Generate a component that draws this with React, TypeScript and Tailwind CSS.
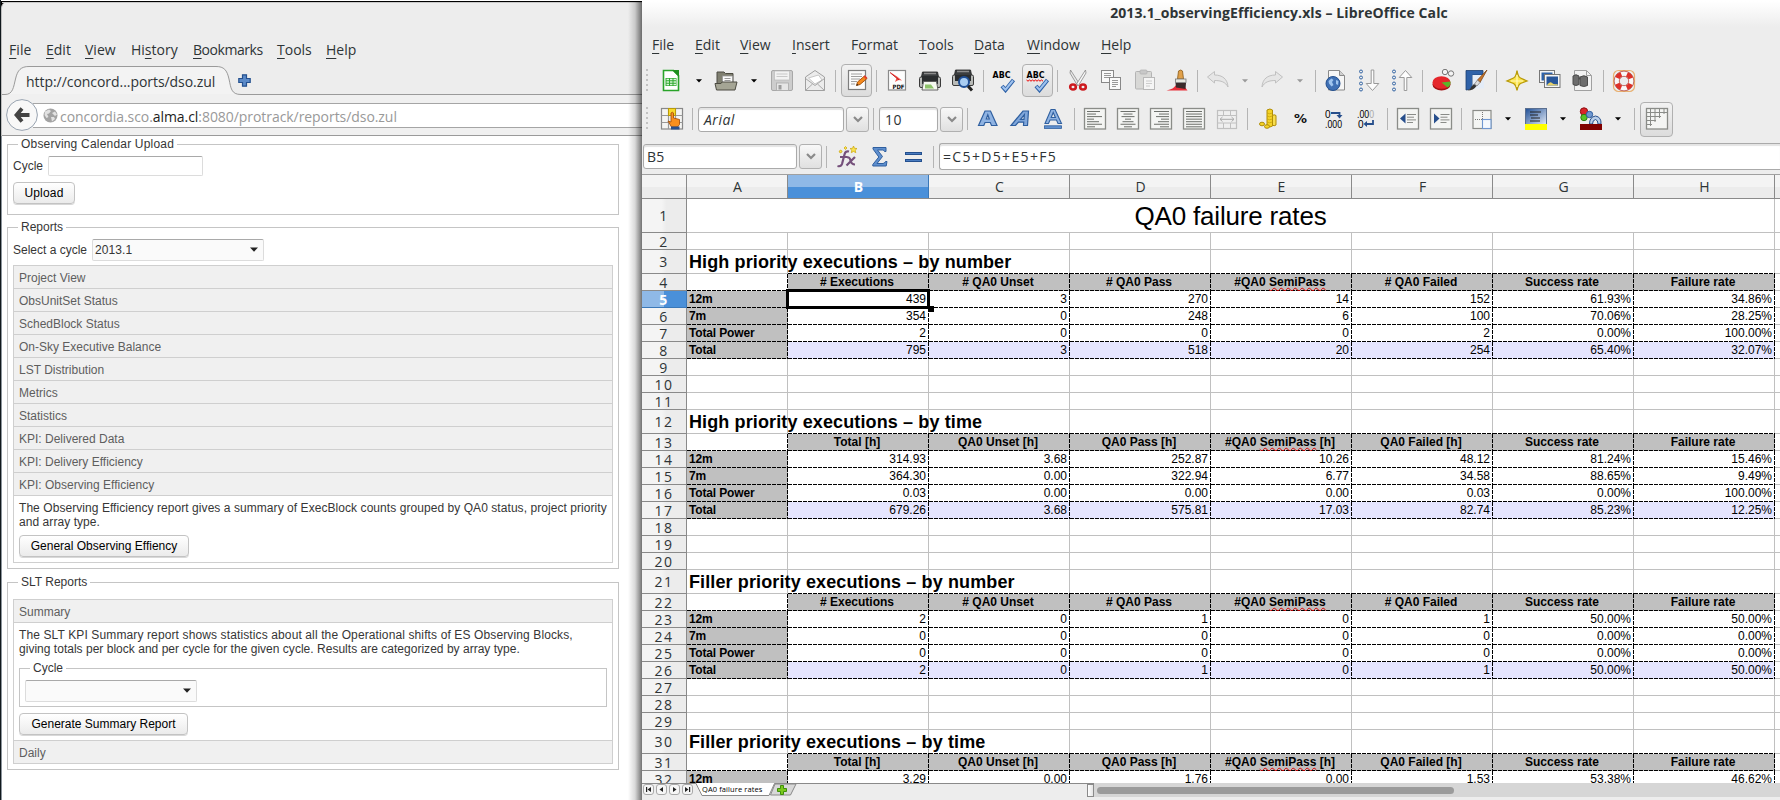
import type { ReactNode } from "react";

/* ---------- shared pieces ---------- */

const UI = "font-['Open_Sans','Noto_Sans',sans-serif]";
const SANS = "font-['Liberation_Sans',Arial,sans-serif]";

function MenuItem({ label, k = 0, className }: { label: string; k?: number; className: string }) {
  return (
    <span className={`shrink-0 whitespace-nowrap ${className}`}>
      {label.slice(0, k)}
      <span className="underline decoration-1 underline-offset-[3px]">{label[k]}</span>
      {label.slice(k + 1)}
    </span>
  );
}

/* ---------- browser window ---------- */

function Legend({ children }: { children: ReactNode }) {
  return <legend className="ml-[5px] h-[13px] px-[3px] leading-[13px]">{children}</legend>;
}

function PushButton({ children, className }: { children: ReactNode; className: string }) {
  return (
    <button
      className={`block h-[22px] rounded-[4px] border border-[#c3c3c3] bg-linear-to-b from-white to-[#ebebeb] text-center leading-[20px] whitespace-nowrap text-black shadow-[0_1px_0_#d8d8d8] ${className}`}
    >
      {children}
    </button>
  );
}

function Combo({ value }: { value: string }) {
  return (
    <div className="flex h-[22px] w-[172px] items-center justify-between rounded-[2px] border border-[#dcdcdc] border-t-[#a9a9a9] bg-[#fafafa] pr-[5px] pb-px pl-[2px]">
      <span className="tracking-[0.1px]">{value}</span>
      <svg width="8" height="5" viewBox="0 0 8 5">
        <path d="M0 .5h8L4 4.8z" fill="#222" />
      </svg>
    </div>
  );
}

function AccordionHead({ children, className = "border-b" }: { children: ReactNode; className?: string }) {
  return (
    <div className={`h-[23px] border-[#cfcfcf] bg-[#f0f0f0] pl-[5px] leading-[24px] text-[#5e5e5e] ${className}`}>
      {children}
    </div>
  );
}

const REPORTS = [
  "Project View",
  "ObsUnitSet Status",
  "SchedBlock Status",
  "On-Sky Executive Balance",
  "LST Distribution",
  "Metrics",
  "Statistics",
  "KPI: Delivered Data",
  "KPI: Delivery Efficiency",
  "KPI: Observing Efficiency",
];

function Browser() {
  return (
    <div className="relative flex h-full w-[642px] shrink-0 flex-col overflow-hidden border-l border-[#10181c] bg-[linear-gradient(#ffffff_0_1px,#000000_1px)] pt-[2px]">
      <div className={`flex h-[134px] shrink-0 flex-col rounded-tl-[6px] border-l border-[#bdbdbd] bg-[#ededed] text-[14px] text-[#2e3436] ${UI}`}>
        <div className="flex h-[64px] items-end border-t border-[#c9c9c9] pb-[6px] pl-[7px] leading-[20px]">
          <MenuItem label="File" className="w-[37px] tracking-[0.1px]" />
          <MenuItem label="Edit" className="w-[39px]" />
          <MenuItem label="View" className="w-[46px]" />
          <MenuItem label="History" k={2} className="w-[62px]" />
          <MenuItem label="Bookmarks" className="w-[84px] tracking-[-0.45px]" />
          <MenuItem label="Tools" className="w-[49px]" />
          <MenuItem label="Help" className="w-[40px]" />
        </div>
        <div className="relative flex h-[29px] items-center">
          <svg className="absolute inset-0" width="640" height="29" viewBox="2 0 640 29">
            <path
              d="M2 28.5H5C13 28.5 13.500 21 15.500 13C17.500 4 21 .5 29 .5H216C224 .5 227 4 229 13C231 22 231 28.500 241 28.500H642"
              fill="#f3f3f3"
              stroke="#9a9a9a"
            />
          </svg>
          <span className="relative ml-[24px] w-[212px] pt-px tracking-[-0.05px]">http://concord...ports/dso.zul</span>
          <svg className="relative" width="13" height="13" viewBox="0 0 13 13">
            <path d="M4.500 .8h4v3.700h3.700v4h-3.700v3.700h-4v-3.700H.8v-4h3.700z" fill="#5b8ac8" stroke="#24508f" strokeWidth="1.200" />
          </svg>
        </div>
        <div className="relative flex h-[41px] items-center border-b border-[#9a9a9a] bg-[#f0f0f0] pl-[4px]">
          <svg className="relative z-10 shrink-0" width="32" height="32" viewBox="0 0 32 32">
            <circle cx="16" cy="16" r="15.400" fill="#f8f8f8" stroke="#98a3b0" strokeWidth="1" />
            <path d="M10 16h13.500M16 9.500L10.500 16l5.500 6.500" fill="none" stroke="#444" strokeWidth="3.800" />
          </svg>
          <div className="-ml-[5px] flex h-[25px] flex-1 items-center border-y border-[#a5a5a5] bg-white pl-[10px]">
            <svg width="15" height="15" viewBox="0 0 15 15">
              <circle cx="7.500" cy="7.500" r="7" fill="#a3a3a3" />
              <path d="M2 3.500L6 1.500 8 3 6 5.500 4 6 5.500 9 3.500 10 1.500 7zM9 5l3-1.500 2 3-2 1.500zM8 9l3 0 1 2-3 2.500z" fill="#e2e2e2" />
            </svg>
            <span className="ml-[2px] pt-[2px] tracking-[-0.06px] whitespace-nowrap text-[#999]">
              concordia.sco.<span className="text-[#1c1c1c]">alma.cl</span>:8080/protrack/reports/dso.zul
            </span>
          </div>
        </div>
      </div>
      <div className={`flex flex-1 flex-col border-l border-[#8c949c] bg-white pt-[2px] pl-[5px] text-[12px] text-[#363636] ${SANS}`}>
        <fieldset className="h-[77px] w-[612px] border border-[#c5c5c5] pt-[5px] pl-[5px]">
          <Legend>
            <span className="tracking-[0.2px]">Observing Calendar Upload</span>
          </Legend>
          <div className="flex h-[20px] items-center">
            <span className="w-[35px] leading-[20px]">Cycle</span>
            <div className="h-[20px] w-[155px] rounded-[2px] border border-[#dcdcdc] border-t-[#a9a9a9] bg-white" />
          </div>
          <PushButton className="mt-[6px] w-[62px] tracking-[0.2px]">Upload</PushButton>
        </fieldset>
        <fieldset className="mt-[6px] h-[348px] w-[612px] border border-[#c5c5c5] px-[5px] pt-[5px]">
          <Legend>Reports</Legend>
          <div className="flex items-center">
            <span className="w-[79px] whitespace-nowrap">Select a cycle</span>
            <Combo value="2013.1" />
          </div>
          <div className="mt-[4px] border border-[#cfcfcf]">
            {REPORTS.map((r) => (
              <AccordionHead key={r}>{r}</AccordionHead>
            ))}
            <div className="h-[66px] pt-[5px] pl-[5px] leading-[14px]">
              <p className="tracking-[0.06px] whitespace-nowrap">
                The Observing Efficiency report gives a summary of ExecBlock counts grouped by QA0 status, project priority
                <br />
                and array type.
              </p>
              <PushButton className="mt-[6px] w-[170px]">General Observing Effiency</PushButton>
            </div>
          </div>
        </fieldset>
        <fieldset className="mt-[7px] h-[194px] w-[612px] border border-[#c5c5c5] px-[5px] pt-[10px]">
          <Legend>SLT Reports</Legend>
          <div className="border border-[#cfcfcf]">
            <AccordionHead>Summary</AccordionHead>
            <div className="h-[117px] px-[5px] pt-[5px] leading-[14px]">
              <p className="tracking-[0.02px] whitespace-nowrap">
                <span className="tracking-[0.12px]">
                  The SLT KPI Summary report shows statistics about all the Operational shifts of ES Observing Blocks,
                </span>
                <br />
                giving totals per block and per cycle for the given cycle. Results are categorized by array type.
              </p>
              <fieldset className="mt-[6px] h-[45px] border border-[#c5c5c5] pt-[5px] pl-[5px]">
                <Legend>Cycle</Legend>
                <Combo value="" />
              </fieldset>
              <PushButton className="mt-[6px] w-[169px]">Generate Summary Report</PushButton>
            </div>
            <AccordionHead className="border-t">Daily</AccordionHead>
          </div>
        </fieldset>
      </div>
      <div className="absolute top-[2px] right-0 bottom-0 w-[14px] bg-linear-to-r from-transparent via-black/15 to-black/55" />
    </div>
  );
}

/* ---------- spreadsheet toolbars ---------- */

function Ico({ className, children }: { className: string; children: ReactNode }) {
  return (
    <svg className={`shrink-0 ${className}`} width="24" height="24" viewBox="0 0 24 24" fill="none">
      {children}
    </svg>
  );
}

function Sep({ className }: { className: string }) {
  return <div className={`h-[22px] w-px shrink-0 bg-[#b4b4b4] ${className}`} />;
}

function Arrow({ className, dim = false }: { className: string; dim?: boolean }) {
  return (
    <svg className={`shrink-0 ${className}`} width="6" height="4" viewBox="0 0 6 4">
      <path d="M0 .3h6L3 3.600z" fill={dim ? "#9a9a9a" : "#000"} />
    </svg>
  );
}

function Grip() {
  return (
    <div className="ml-[4px] h-[24px] w-[2px] shrink-0 bg-[repeating-linear-gradient(180deg,#c2c2c2_0_2px,transparent_2px_5px)]" />
  );
}

function Toggle({ className, children }: { className: string; children: ReactNode }) {
  return (
    <div className={`flex shrink-0 items-center justify-center rounded-[4px] border border-[#b0b0b0] bg-linear-to-b from-[#f2f2f2] to-[#dcdcdc] ${className}`}>
      {children}
    </div>
  );
}

function Field({ className, children }: { className: string; children: ReactNode }) {
  return (
    <div className={`h-[25px] shrink-0 rounded-[3px] border border-[#aaa] bg-white leading-[24px] shadow-[inset_0_2px_1px_#e4e4e4] ${className}`}>
      {children}
    </div>
  );
}

function DropButton({ className }: { className: string }) {
  return (
    <div className={`flex h-[25px] w-[23px] shrink-0 items-center justify-center rounded-[3px] border border-[#b0b0b0] bg-linear-to-b from-[#f8f8f8] to-[#e0e0e0] ${className}`}>
      <svg width="10" height="7" viewBox="0 0 10 7">
        <path d="M1 1l4 4 4-4" fill="none" stroke="#8a8a8a" strokeWidth="2.200" />
      </svg>
    </div>
  );
}

function AbcCheck({ wavy }: { wavy: boolean }) {
  return (
    <>
      <text x="0.500" y="9" fontSize="8.500" fontWeight="700" fill="#000" fontFamily="DejaVu Sans" textLength="18" lengthAdjust="spacingAndGlyphs">
        ABC
      </text>
      {wavy && <path d="M.5 11l1.500 1.200 1.500-1.200 1.500 1.200 1.500-1.200 1.500 1.200 1.500-1.200 1.500 1.200 1.500-1.200 1.500 1.200 1.500-1.200 1.500 1.200" stroke="#e00" />}
      <path d="M10 17l3.500 4L21.500 11" stroke="#2f62a8" strokeWidth="4" />
      <path d="M10.500 17.500l3 3.200L21 11.500" stroke="#9fc2ee" strokeWidth="2" />
    </>
  );
}

function AlignIcon({ className, rows }: { className: string; rows: [number, number][] }) {
  return (
    <Ico className={className}>
      <rect x="1.500" y="1.500" width="21" height="20.500" fill="#f4f5f3" stroke="#8a8c88" strokeWidth="1.300" />
      {rows.map(([x, w], i) => (
        <rect key={i} x={x} y={4 + i * 2.55} width={w} height="1" fill="#6d706b" />
      ))}
    </Ico>
  );
}

function ToolbarMain() {
  return (
    <div className="flex h-[33px] shrink-0 items-center">
      <Grip />
      <Ico className="ml-[11px]">
        <path d="M4.500 1.500h10l5 5v15h-15z" fill="#fff" stroke="#29a329" strokeWidth="1.600" />
        <path d="M13 1h7v7z" fill="#1f8f1f" />
        <rect x="6.500" y="9" width="11" height="8" fill="#2fa82f" />
        <path d="M7.500 10.500h2.500M11 10.500h2.500M14.500 10.500H17M7.500 13h2.500M11 13h2.500M14.500 13H17M7.500 15.500h2.500M11 15.500h2.500M14.500 15.500H17" stroke="#d8f5d8" strokeWidth="1.300" />
      </Ico>
      <Arrow className="ml-[13px]" />
      <Ico className="ml-[12px]">
        <path d="M3 3h7l1.500 1.500H19v14H3z" fill="#7f7f70" stroke="#4c4b42" />
        <rect x="8.500" y="7" width="10" height="10" fill="#fafafa" stroke="#999" strokeWidth=".8" />
        <path d="M10.500 9.500h6M10.500 11.500h6" stroke="#999" />
        <path d="M1 14.500h6l1-1.500h15l-2 8H2.500z" fill="#a5a595" stroke="#4c4b42" />
      </Ico>
      <Arrow className="ml-[13px]" />
      <Ico className="ml-[13px]">
        <rect x="1.500" y="1.500" width="21" height="20" rx="1.500" fill="#cdcdcd" stroke="#a8a8a8" />
        <rect x="4.500" y="2" width="15" height="9" fill="#f2f2f2" stroke="#bbb" strokeWidth=".7" />
        <path d="M6.500 5h11M6.500 7.500h11" stroke="#c8c8c8" />
        <rect x="6.500" y="14" width="12" height="7.500" fill="#e6e6e6" stroke="#aaa" strokeWidth=".8" />
        <rect x="8.500" y="16" width="3" height="4.500" fill="#9c9c9c" />
      </Ico>
      <Ico className="ml-[9px]">
        <path d="M2.500 8L12 1.500 21.500 8v13.500h-19z" fill="#ececec" stroke="#a0a0a0" />
        <path d="M5.500 9l10-3 3.500 5-7 4z" fill="#fff" stroke="#bbb" strokeWidth=".8" />
        <path d="M2.500 9.500l9.500 7 9.500-7M2.500 21.500l7-6.500M21.500 21.500l-7-6.500" stroke="#a8a8a8" />
      </Ico>
      <Sep className="ml-[8px]" />
      <Toggle className="ml-[5px] h-[33px] w-[31px]">
        <Ico className="">
          <rect x="3.500" y="1.500" width="17" height="19" fill="#fbfbfb" stroke="#7d7d7d" strokeWidth="1.200" />
          <path d="M6 5h11M6 7.500h11M6 10h9M6 12.500h6M6 15h4" stroke="#a0a0a0" />
          <path d="M11.500 16.500l1-3.500 7-6 2.500 2.500-7 6z" fill="#f58a1e" stroke="#a04c05" strokeWidth=".9" />
          <path d="M18.500 7.500l1.300-1.200 2.500 2.500-1.300 1.400z" fill="#e23b2e" />
          <path d="M11.300 16.800l.7-2 1.400 1.300z" fill="#222" />
        </Ico>
      </Toggle>
      <Sep className="ml-[4px]" />
      <Ico className="ml-[8px]">
        <rect x="3.500" y="1.500" width="17" height="19.500" fill="#fdfdfd" stroke="#8a8a8a" strokeWidth="1.200" />
        <path d="M5 3l7 4.500 5 4-3.500-.5-3.500 2 1.500-4z" fill="#f0514a" />
        <path d="M5 3.500l9 7.500" stroke="#c81414" />
        <text x="7.500" y="19.500" fontSize="6" fontWeight="700" fill="#111" fontFamily="DejaVu Sans" textLength="12" lengthAdjust="spacingAndGlyphs">
          PDF
        </text>
      </Ico>
      <Ico className="ml-[9px]">
        <path d="M4.500 3h15l1.500 7H3z" fill="#3b3e40" stroke="#222" strokeWidth=".8" />
        <path d="M6 4.500h12" stroke="#8c8c8c" strokeWidth="1.500" />
        <rect x="1.500" y="8" width="21" height="10.500" rx="1.500" fill="#b9bbb8" stroke="#3a3a3a" />
        <rect x="4" y="7" width="16" height="8" fill="#2a2d2f" />
        <path d="M5.500 12.500h13l1.500 8.500H4z" fill="#f4f8f0" stroke="#555" strokeWidth=".9" />
        <path d="M7 15.500h6l3 4H7z" fill="#8dc26a" />
      </Ico>
      <Ico className="ml-[9px]">
        <path d="M4.500 1h15l1.500 7H3z" fill="#3b3e40" stroke="#222" strokeWidth=".8" />
        <path d="M6 2.500h12" stroke="#8c8c8c" strokeWidth="1.500" />
        <rect x="1.500" y="6" width="21" height="10.500" rx="1.500" fill="#b9bbb8" stroke="#3a3a3a" />
        <rect x="4" y="6" width="16" height="6" fill="#2a2d2f" />
        <circle cx="13" cy="13" r="5" fill="#a9cdf2" stroke="#1f4f96" strokeWidth="2" />
        <path d="M17 17l4 4.500" stroke="#222" strokeWidth="3" />
      </Ico>
      <Sep className="ml-[8px]" />
      <Ico className="ml-[8px]">
        <AbcCheck wavy={false} />
      </Ico>
      <Toggle className="ml-[6px] h-[33px] w-[31px]">
        <Ico className="">
          <AbcCheck wavy />
        </Ico>
      </Toggle>
      <Sep className="ml-[4px]" />
      <Ico className="ml-[8px]">
        <path d="M4.500 1l9 14-2 1.500L4 4z" fill="#e8e8e8" stroke="#888" strokeWidth=".8" />
        <path d="M19.500 1l-9 14 2 1.500L20 4z" fill="#f8f8f8" stroke="#888" strokeWidth=".8" />
        <ellipse cx="7" cy="18" rx="2.800" ry="2.500" stroke="#cc1a1f" strokeWidth="2.600" />
        <ellipse cx="17" cy="18" rx="2.800" ry="2.500" stroke="#cc1a1f" strokeWidth="2.600" />
      </Ico>
      <Ico className="ml-[9px]">
        <rect x="2.500" y="1.500" width="12" height="12" fill="#fafafa" stroke="#888" />
        <path d="M5 4.500h7M5 6.500h7M5 8.500h5" stroke="#999" />
        <rect x="10.500" y="8.500" width="11" height="12" fill="#fafafa" stroke="#888" />
        <path d="M13 11.500h6M13 13.500h6M13 15.500h6M13 17.500h4" stroke="#999" />
      </Ico>
      <Ico className="ml-[10px]">
        <rect x="2.500" y="2.500" width="16" height="17.500" rx="1" fill="#d8d8d6" stroke="#b4b4b4" />
        <rect x="7" y="1" width="7" height="4" rx="1" fill="#c8c8c8" stroke="#b0b0b0" strokeWidth=".7" />
        <rect x="10.500" y="8.500" width="11" height="12" fill="#f5f5f5" stroke="#b8b8b8" />
        <path d="M13 12h6M13 14.500h6M13 17h4" stroke="#ccc" />
      </Ico>
      <Ico className="ml-[9px]">
        <path d="M.5 21.500c5-1 8-3 9-5l9 1 3 4z" fill="#e8303a" />
        <path d="M12.500 2q2.500-2 4 0l1 8h-6z" fill="#e0a04a" stroke="#8a5a16" strokeWidth=".8" />
        <rect x="9.500" y="10" width="10.500" height="3.500" fill="#e8e8e0" stroke="#777" strokeWidth=".8" />
        <path d="M9.500 14h10.500l-.5 6-9.500-1.500z" fill="#3a2a2a" />
      </Ico>
      <Sep className="ml-[7px]" />
      <Ico className="ml-[8px]">
        <path d="M1.500 8l7-5.500V6c8 0 13 4 13.500 12-2.500-5-7-6.500-13.500-6.500V14z" fill="#e6e6e6" stroke="#c0c0c0" />
      </Ico>
      <Arrow dim className="ml-[12px]" />
      <Ico className="ml-[12px]">
        <path d="M22.500 8l-7-5.500V6C7.500 6 2.500 10 2 18c2.500-5 7-6.500 13.500-6.500V14z" fill="#e6e6e6" stroke="#c0c0c0" />
      </Ico>
      <Arrow dim className="ml-[13px]" />
      <Sep className="ml-[12px]" />
      <Ico className="ml-[8px]">
        <path d="M4.500 1.500h11l5 5v14.500h-16z" fill="#f6f6f6" stroke="#8a8a8a" />
        <path d="M15.500 1.500v5h5" fill="#d0d0d0" stroke="#8a8a8a" />
        <circle cx="9" cy="14.500" r="7" fill="#3f70b4" stroke="#24508f" />
        <path d="M4.500 12l3-2.500 2 1.500-1.500 2L9.500 16l-2 1.500L5 14.500zM12 11l2.500 1-.5 4-2-1z" fill="#9fc4ee" />
      </Ico>
      <Ico className="ml-[9px]">
        <circle cx="4" cy="2.500" r="1.500" stroke="#3465a4" />
        <circle cx="4" cy="8.500" r="1.500" stroke="#3465a4" />
        <circle cx="4" cy="14.500" r="1.500" stroke="#3465a4" />
        <circle cx="4" cy="20.500" r="1.500" stroke="#3465a4" />
        <path d="M14.200 1h2.600v13.500h5L15.500 21.500l-6.300-7h5z" fill="#fdfdfd" stroke="#999" />
      </Ico>
      <Ico className="ml-[9px]">
        <circle cx="4" cy="2.500" r="1.500" stroke="#3465a4" />
        <circle cx="4" cy="8.500" r="1.500" stroke="#3465a4" />
        <circle cx="4" cy="14.500" r="1.500" stroke="#3465a4" />
        <circle cx="4" cy="20.500" r="1.500" stroke="#3465a4" />
        <path d="M14.200 21.500V8.500h-5l6.300-7 6.300 7h-5v13z" fill="#fdfdfd" stroke="#999" />
      </Ico>
      <Sep className="ml-[8px]" />
      <Ico className="ml-[8px]">
        <ellipse cx="10.500" cy="15.500" rx="9" ry="6" fill="#a30f12" />
        <ellipse cx="10.500" cy="13.500" rx="9" ry="6.300" fill="#e5262b" />
        <path d="M10.500 13.500l9-1q.5 4-3 6z" fill="#5bb52a" />
        <circle cx="14" cy="3" r="2.700" fill="#f4f4f4" stroke="#777" />
        <circle cx="20" cy="4.500" r="2.700" fill="#f4f4f4" stroke="#777" />
      </Ico>
      <Ico className="ml-[9px]">
        <path d="M2 1.500h17v4.500H8.500v12q-2 3-6.500 3z" fill="#2f62a8" stroke="#1c3f70" strokeWidth=".8" />
        <path d="M8.500 6H20v13.500H8.500z" fill="#e4ecf7" />
        <path d="M23 1l-9.500 10 2.500 2.500z" fill="#c9772b" stroke="#7b4311" strokeWidth=".8" />
        <path d="M13.500 11l2.500 2.500-3 3.500-2.500-2z" fill="#ddd" stroke="#777" strokeWidth=".7" />
        <path d="M10 15l2.500 2q-3 4.500-9 4.500 3.500-1.500 3.500-3.500z" fill="#333" />
      </Ico>
      <Sep className="ml-[8px]" />
      <Ico className="ml-[8px]">
        <path d="M12 1.500q1 6.500 3.500 7.500l6.500 3-6.500 2.500q-2.500 1.500-3.500 7-1-5.500-3.500-7L2 12l6.500-3Q11 8 12 1.500z" fill="#fbe34c" stroke="#b89a08" strokeWidth="1.300" />
        <path d="M12 6v12M6 12h12" stroke="#fff8b8" strokeWidth="1.200" />
      </Ico>
      <Ico className="ml-[9px]">
        <rect x="1.500" y="1.500" width="15" height="12" fill="#f6f6f6" stroke="#777" />
        <rect x="3.500" y="3.500" width="11" height="8" fill="#2f62a8" />
        <rect x="6.500" y="5.500" width="15.500" height="13" fill="#f6f6f6" stroke="#777" />
        <rect x="8.500" y="7.500" width="11.500" height="9" fill="#28569a" />
        <path d="M9 16q3-4 5-2t5.500 1v1.500H9z" fill="#e8d26a" />
      </Ico>
      <Ico className="ml-[9px]">
        <path d="M3.500 1.500h12l5 5V21.500h-17z" fill="#f2f2f2" stroke="#a0a0a0" />
        <path d="M15.500 1.500v5h5" stroke="#a0a0a0" />
        <path d="M2 7q3-2.500 6 0v8.500q-3 2-6 0zM9 8q4-2.500 7.500 0v8.500q-3.500 2-7.500 0z" fill="#6d6d6d" stroke="#4c4c4c" />
        <path d="M7.500 9.500h2" stroke="#4c4c4c" strokeWidth="2" />
      </Ico>
      <Sep className="ml-[8px]" />
      <Ico className="ml-[8px]">
        <rect x="1.500" y="1.500" width="21" height="21" rx="5" stroke="#e8b070" strokeWidth="1.200" />
        <circle cx="12" cy="12" r="7.300" stroke="#f8f8f8" strokeWidth="5" />
        <circle cx="12" cy="12" r="7.300" stroke="#e03028" strokeWidth="5" strokeDasharray="5.730 5.730" strokeDashoffset="2.870" transform="rotate(45 12 12)" />
        <circle cx="12" cy="12" r="9.900" stroke="#b5463c" strokeWidth=".8" />
        <circle cx="12" cy="12" r="4.700" stroke="#b5463c" strokeWidth=".8" />
      </Ico>
    </div>
  );
}

function ToolbarFormat() {
  return (
    <div className="flex h-[44px] shrink-0 items-center">
      <Grip />
      <Ico className="ml-[12px]">
        <rect x="1.500" y="1.500" width="21" height="20.500" fill="#f4f4f2" stroke="#888" strokeWidth="1.200" />
        <path d="M8.500 1.500V22M15.500 1.500V22M1.500 8.500h21M1.500 15.500h21" stroke="#999" strokeWidth="1.200" />
        <rect x="8.500" y="1.500" width="7" height="7" fill="#f8d92a" stroke="#b89a08" />
        <path d="M11 6q1.500-1.500 2.500 0v5l6 1.500v5l-2 2.500h-6l-3.500-6 3 1z" fill="#f78f1e" stroke="#a8520a" strokeWidth=".9" />
        <rect x="11" y="19.500" width="8.500" height="3" fill="#274f8c" />
      </Ico>
      <Sep className="ml-[8px]" />
      <Field className="ml-[5px] w-[146px] pl-[5px] tracking-[0.5px] italic">Arial</Field>
      <DropButton className="ml-[2px]" />
      <Sep className="ml-[4px]" />
      <Field className="ml-[5px] w-[59px] pl-[5px] tracking-[0.6px]">10</Field>
      <DropButton className="ml-[2px]" />
      <Sep className="ml-[4px]" />
      <Ico className="ml-[8px]">
        <path d="M2.500 18.500L9 4h5.500L21 18.500h-5.500l-1.200-3H9l-1.200 3zM10.300 12h3L11.800 7.800z" fill="#8fb3e2" stroke="#2f5f9f" strokeWidth="1.200" />
      </Ico>
      <Ico className="ml-[9px]">
        <path d="M2 18.500L14 4h5.500L18.500 18.500h-4l.2-3.300H9.500L6.500 18.500zM11.500 12.300h3.500l.4-4.600z" fill="#7fa6da" stroke="#2f5f9f" strokeWidth="1.200" />
      </Ico>
      <Ico className="ml-[8px]">
        <path d="M4 16.500L10 2.500h4L20.500 16.500H17l-1.500-3.500H9l-1.500 3.500zM10.200 10.500h4.200L12.200 5.500z" fill="#8fb3e2" stroke="#2f5f9f" strokeWidth="1.100" />
        <rect x="3.500" y="18.800" width="17" height="2.600" fill="#5f8fce" stroke="#2f5f9f" strokeWidth=".8" />
      </Ico>
      <Sep className="ml-[9px]" />
      <AlignIcon className="ml-[8px]" rows={[[4, 13], [4, 9], [4, 15], [4, 7], [4, 12], [4, 15], [4, 8]]} />
      <AlignIcon className="ml-[9px]" rows={[[4.5, 15], [7.5, 9], [5.5, 13], [9, 6], [6.5, 11], [4.5, 15], [8, 8]]} />
      <AlignIcon className="ml-[9px]" rows={[[5, 15], [10, 10], [7, 13], [12, 8], [9, 11], [5, 15], [11, 9]]} />
      <AlignIcon className="ml-[9px]" rows={[[4, 16], [4, 16], [4, 16], [4, 16], [4, 16], [4, 16], [4, 16]]} />
      <Ico className="ml-[9px]">
        <rect x="2.500" y="3.500" width="19" height="18" fill="#efefef" stroke="#c0c0c0" strokeWidth="1.200" />
        <path d="M2.500 8.500h19M2.500 16h19M8.500 3.500v5M15.500 3.500v5M8.500 16v5.500M15.500 16v5.500" stroke="#c0c0c0" />
        <path d="M5 12.300h14M7.500 10l-2.500 2.300 2.500 2.300M16.500 10l2.500 2.300-2.500 2.300" stroke="#aaa" />
      </Ico>
      <Sep className="ml-[8px]" />
      <Ico className="ml-[9px]">
        <path d="M10 3q3-2 5.500 0v16q-2.500 2-5.500 0z" fill="#f5d327" stroke="#b08d06" />
        <path d="M15.500 8.500q1.500-1.500 3.500 0v9.500q-2 1.500-3.500 0z" fill="#f7dd4f" stroke="#b08d06" />
        <path d="M10 6q2.500 1.500 5.500 0M10 9q2.500 1.500 5.500 0M10 12q2.500 1.500 5.500 0M10 15q2.500 1.500 5.500 0" stroke="#c9a40c" strokeWidth=".8" />
        <ellipse cx="5" cy="17" rx="2.500" ry="1.800" fill="#f5d327" stroke="#b08d06" />
        <ellipse cx="10" cy="19.500" rx="2.500" ry="1.800" fill="#f5d327" stroke="#b08d06" />
      </Ico>
      <Ico className="ml-[8px]">
        <text x="5" y="16" fontSize="12" fontWeight="700" fill="#111" fontFamily="DejaVu Sans" textLength="13" lengthAdjust="spacingAndGlyphs">
          %
        </text>
      </Ico>
      <Ico className="ml-[9px]">
        <text x="3" y="10.500" fontSize="10" fill="#000" fontFamily="Liberation Sans">
          0
        </text>
        <text x="3" y="20.500" fontSize="10" fill="#000" fontFamily="Liberation Sans" textLength="17" lengthAdjust="spacingAndGlyphs">
          .000
        </text>
        <path d="M9 6h8.500v3" stroke="#274f8c" strokeWidth="1.800" />
        <path d="M14.500 8h6l-3 3.500z" fill="#274f8c" />
      </Ico>
      <Ico className="ml-[9px]">
        <text x="2" y="10.500" fontSize="10" fill="#000" fontFamily="Liberation Sans" textLength="17" lengthAdjust="spacingAndGlyphs">
          .00<tspan fill="#aaa">0</tspan>
        </text>
        <text x="3" y="20.500" fontSize="10" fill="#000" fontFamily="Liberation Sans">
          0
        </text>
        <path d="M18 13v4h-7" stroke="#274f8c" strokeWidth="1.800" />
        <path d="M12 14v6l-3.500-3z" fill="#274f8c" />
      </Ico>
      <Sep className="ml-[8px]" />
      <Ico className="ml-[8px]">
        <rect x="1.500" y="1.500" width="21" height="20.500" fill="#f4f5f3" stroke="#8a8c88" strokeWidth="1.300" />
        <path d="M9.500 6.500v10L4 11.500z" fill="#274f8c" />
        <path d="M11 7.500h9M11 10.200h7M11 12.900h9M11 15.500h6" stroke="#8a8c88" />
      </Ico>
      <Ico className="ml-[9px]">
        <rect x="1.500" y="1.500" width="21" height="20.500" fill="#f4f5f3" stroke="#8a8c88" strokeWidth="1.300" />
        <path d="M5 6.500v10l5.500-5z" fill="#274f8c" />
        <path d="M11.500 7.500h9M11.500 10.200h7M11.500 12.900h9M11.500 15.500h6" stroke="#8a8c88" />
      </Ico>
      <Sep className="ml-[8px]" />
      <Ico className="ml-[8px]">
        <rect x="3" y="3.500" width="18" height="18" fill="#f4f5f3" stroke="#8a8c88" strokeWidth="1.200" />
        <path d="M12.500 5v8M5 12.500h8" stroke="#777" strokeDasharray="1 1" />
        <rect x="12.500" y="12.500" width="8.500" height="9" fill="#f4f8fd" stroke="#6f97d0" strokeWidth="1.100" />
      </Ico>
      <Arrow className="ml-[11px]" />
      <Ico className="ml-[13px]">
        <linearGradient id="fill-sky" x1="0" y1="0" x2="1" y2="1">
          <stop offset="0" stopColor="#1f4f96" />
          <stop offset="1" stopColor="#e8effa" />
        </linearGradient>
        <rect x="1.500" y="1.500" width="21" height="17" fill="url(#fill-sky)" stroke="#5a6f90" />
        <path d="M6 5h11M6 8h8M7 11h9M6 14h10" stroke="#222" strokeWidth="1.200" />
        <rect x="1" y="17" width="22" height="6" fill="#ffff00" />
      </Ico>
      <Arrow className="ml-[12px]" />
      <Ico className="ml-[13px]">
        <circle cx="5" cy="4.500" r="3.700" fill="#d9252a" stroke="#8f0f12" />
        <circle cx="5" cy="10.500" r="3.200" fill="#59c22a" stroke="#2f7d10" />
        <circle cx="10.500" cy="7.500" r="3.200" fill="#6f97d0" stroke="#2f5f9f" />
        <path d="M10.500 17q0-7 6-8 6 1 5.500 8h-3q0-4-2.500-4.500-3 .5-3 4.500z" fill="#b9cfea" stroke="#274f8c" />
        <rect x="1" y="17" width="22" height="6" fill="#800000" />
      </Ico>
      <Arrow className="ml-[12px]" />
      <Sep className="ml-[13px]" />
      <Toggle className="ml-[5px] h-[35px] w-[33px]">
        <Ico className="">
          <rect x="1.500" y="1.500" width="21" height="20.500" fill="#f4f5f3" stroke="#8a8c88" strokeWidth="1.300" />
          <path d="M2 5.500h20M2 9.500h14M2 13.500h9M2 17.500h5M5.500 2v17M10 2v13M14.500 2v9M19 2v5" stroke="#8a8c88" />
        </Ico>
      </Toggle>
    </div>
  );
}

function FormulaBar() {
  return (
    <div className="flex h-[33px] shrink-0 items-center pb-[2px]">
      <Field className="ml-px w-[154px] pl-[3px] tracking-[0.3px]">B5</Field>
      <DropButton className="ml-[2px]" />
      <Sep className="ml-[4px]" />
      <Ico className="ml-[8px]">
        <path d="M14 6.500q-3.500-1-4.500 3L7 19q-1 3-4.500 2M5 12h7.500" stroke="#75507b" strokeWidth="2.200" />
        <path d="M12 12.500q2.500-1 3.500 3t4.500 4M20 12l-8.500 8.500" stroke="#75507b" strokeWidth="2.200" />
        <path d="M4 7l1.200-2 2 1-1.200 2zM9 3l1.500-1.500L12 3l-1.500 1.500zM18.500 1l1 2.300 2.500.2-1.800 1.700.6 2.500-2.300-1.300-2.200 1.300.5-2.500L15 3.500l2.500-.2z" fill="#fbe34c" stroke="#c9a40c" strokeWidth=".7" />
      </Ico>
      <Ico className="ml-[9px]">
        <path d="M5 2.500h13v4h-1.500q-.5-1.500-2-1.500H9.500l5 6.500-5.500 7h6q1.500 0 2.500-2h1.500l-.8 4.500H4.800v-1.500l6-7.500L5 4z" fill="#5f8fce" stroke="#2f5f9f" />
      </Ico>
      <Ico className="ml-[9px]">
        <rect x="4.500" y="7.500" width="16" height="2" fill="#4a7cc0" stroke="#24508f" />
        <rect x="4.500" y="14.500" width="16" height="2" fill="#4a7cc0" stroke="#24508f" />
      </Ico>
      <Sep className="ml-[8px]" />
      <div className="ml-[5px] h-[27px] flex-1 rounded-l-[3px] border border-r-0 border-[#aaa] bg-white pl-[3px] leading-[26px] tracking-[1.35px] shadow-[inset_0_2px_1px_#e4e4e4]">
        =C5+D5+E5+F5
      </div>
    </div>
  );
}

/* ---------- sheet ---------- */

type Row =
  | { kind: "title"; text: string }
  | { kind: "blank" }
  | { kind: "heading"; text: string }
  | { kind: "labels"; cells: string[] }
  | { kind: "data"; cells: string[] }
  | { kind: "total"; cells: string[] };

const COUNT = ["# Executions", "# QA0 Unset", "# QA0 Pass", "#QA0 SemiPass", "# QA0 Failed", "Success rate", "Failure rate"];
const HOURS = ["Total [h]", "QA0 Unset [h]", "QA0 Pass [h]", "#QA0 SemiPass [h]", "QA0 Failed [h]", "Success rate", "Failure rate"];
const blank: Row = { kind: "blank" };

const ROWS: Row[] = [
  { kind: "title", text: "QA0 failure rates" },
  blank,
  { kind: "heading", text: "High priority executions – by number" },
  { kind: "labels", cells: COUNT },
  { kind: "data", cells: ["12m", "439", "3", "270", "14", "152", "61.93%", "34.86%"] },
  { kind: "data", cells: ["7m", "354", "0", "248", "6", "100", "70.06%", "28.25%"] },
  { kind: "data", cells: ["Total Power", "2", "0", "0", "0", "2", "0.00%", "100.00%"] },
  { kind: "total", cells: ["Total", "795", "3", "518", "20", "254", "65.40%", "32.07%"] },
  blank,
  blank,
  blank,
  { kind: "heading", text: "High priority executions – by time" },
  { kind: "labels", cells: HOURS },
  { kind: "data", cells: ["12m", "314.93", "3.68", "252.87", "10.26", "48.12", "81.24%", "15.46%"] },
  { kind: "data", cells: ["7m", "364.30", "0.00", "322.94", "6.77", "34.58", "88.65%", "9.49%"] },
  { kind: "data", cells: ["Total Power", "0.03", "0.00", "0.00", "0.00", "0.03", "0.00%", "100.00%"] },
  { kind: "total", cells: ["Total", "679.26", "3.68", "575.81", "17.03", "82.74", "85.23%", "12.25%"] },
  blank,
  blank,
  blank,
  { kind: "heading", text: "Filler priority executions – by number" },
  { kind: "labels", cells: COUNT },
  { kind: "data", cells: ["12m", "2", "0", "1", "0", "1", "50.00%", "50.00%"] },
  { kind: "data", cells: ["7m", "0", "0", "0", "0", "0", "0.00%", "0.00%"] },
  { kind: "data", cells: ["Total Power", "0", "0", "0", "0", "0", "0.00%", "0.00%"] },
  { kind: "total", cells: ["Total", "2", "0", "1", "0", "1", "50.00%", "50.00%"] },
  blank,
  blank,
  blank,
  { kind: "heading", text: "Filler priority executions – by time" },
  { kind: "labels", cells: HOURS },
  { kind: "data", cells: ["12m", "3.29", "0.00", "1.76", "0.00", "1.53", "53.38%", "46.62%"] },
];

const COLS = [0, 1, 2, 3, 4, 5, 6];
const GRID_LINES = "border-r border-b border-[#c0c0c0]";
const DASH_ALL =
  "bg-no-repeat [background-image:repeating-linear-gradient(90deg,#000_0_4px,transparent_4px_5px),repeating-linear-gradient(180deg,#000_0_4px,transparent_4px_5px)] [background-size:100%_1px,1px_100%] [background-position:0_100%,100%_0]";
const DASH_BOTTOM =
  "bg-no-repeat [background-image:repeating-linear-gradient(90deg,#000_0_4px,transparent_4px_5px),linear-gradient(#c0c0c0,#c0c0c0)] [background-size:100%_1px,1px_100%] [background-position:0_100%,100%_0]";

function labelText(t: string) {
  const i = t.indexOf("SemiPass");
  if (i < 0) return t;
  return (
    <>
      {t.slice(0, i)}
      <span className="underline decoration-[#e00000] decoration-wavy decoration-[0.5px] underline-offset-[1px]">SemiPass</span>
      {t.slice(i + 8)}
    </>
  );
}

function Cells({ row, active }: { row: Row; active: boolean }) {
  switch (row.kind) {
    case "title":
      return (
        <div className={`w-[1088px] text-center text-[26px] leading-[34px] tracking-[-0.18px] ${GRID_LINES}`}>{row.text}</div>
      );
    case "blank":
      return (
        <>
          <div className={`w-[101px] ${GRID_LINES}`} />
          {COLS.map((c) => (
            <div key={c} className={`w-[141px] ${GRID_LINES}`} />
          ))}
        </>
      );
    case "heading":
      return (
        <>
          <div className={`relative z-10 w-[101px] pt-px pl-[2px] text-[18px] leading-[22px] font-bold tracking-[0.12px] whitespace-nowrap ${GRID_LINES}`}>
            {row.text}
          </div>
          {COLS.map((c) => (
            <div key={c} className={`w-[141px] ${DASH_BOTTOM}`} />
          ))}
        </>
      );
    case "labels":
      return (
        <>
          <div className={`w-[101px] ${DASH_ALL}`} />
          {row.cells.map((t, i) => (
            <div key={i} className={`w-[141px] bg-[#c0c0c0] pr-[3px] text-center font-bold ${DASH_ALL}`}>
              {labelText(t)}
            </div>
          ))}
        </>
      );
    default:
      return (
        <>
          <div className={`w-[101px] bg-[#c0c0c0] pl-[2px] font-bold tracking-[-0.15px] ${DASH_ALL}`}>{row.cells[0]}</div>
          {row.cells.slice(1).map((t, i) => (
            <div
              key={i}
              className={`relative w-[141px] pr-[3px] text-right ${row.kind === "total" ? "bg-[#e6e6ff]" : "bg-white"} ${active && i === 0 ? "z-10" : ""} ${DASH_ALL}`}
            >
              {t}
              {active && i === 0 && (
                <>
                  <div className="absolute -top-[2px] right-[-1px] -bottom-px -left-[2px] border-[3px] border-black" />
                  <div className="absolute right-[-5px] bottom-[-4px] size-[6px] bg-black" />
                </>
              )}
            </div>
          ))}
        </>
      );
  }
}

function rowHeight(row: Row) {
  if (row.kind === "title") return "h-[34px]";
  if (row.kind === "heading") return "h-[24px]";
  return "h-[17px]";
}

function Sheet() {
  return (
    <div className="flex h-[609px] shrink-0 flex-col overflow-hidden bg-white">
      <div className={`flex h-[25px] shrink-0 border-y border-t-[#a0a0a0] border-b-[#8a8a8a] bg-[linear-gradient(#f4f4f4_0_50%,#ececec_50%_100%)] text-center leading-[24px] ${UI}`}>
        <div className="w-[45px] border-r border-[#8a8a8a]" />
        <div className="w-[101px] border-r border-[#8a8a8a] pl-px">A</div>
        {["B", "C", "D", "E", "F", "G", "H"].map((c) => (
          <div
            key={c}
            className={`w-[141px] border-r pl-px ${c === "B" ? "border-[#3a78b8] bg-[linear-gradient(#8fb9e7_0_50%,#4a90d9_50%_100%)] font-bold text-white" : "border-[#8a8a8a]"}`}
          >
            {c}
          </div>
        ))}
      </div>
      {ROWS.map((row, i) => (
        <div key={i} className={`flex shrink-0 ${rowHeight(row)} text-[12px] leading-[17px] text-black ${SANS}`}>
          <div
            className={`flex w-[45px] items-center justify-center border-r border-b pt-px text-[14px] leading-none tracking-[1.6px] ${UI} ${
              i === 4
                ? "border-[#3a78b8] bg-[linear-gradient(90deg,#8fb9e7_0_50%,#4a90d9_50%_100%)] font-bold text-white"
                : "border-[#8a8a8a] bg-[linear-gradient(90deg,#f4f4f4_0_45%,#ececec_55%_100%)] text-[#2e3436]"
            }`}
          >
            {i + 1}
          </div>
          <Cells row={row} active={i === 4} />
          <div className="flex-1 border-b border-[#c0c0c0]" />
        </div>
      ))}
    </div>
  );
}

function NavButton({ d }: { d: string }) {
  return (
    <svg width="11" height="11" viewBox="0 0 11 11" className="shrink-0">
      <rect x=".5" y=".5" width="10" height="10" rx="2.500" fill="#f6f6f6" stroke="#a8a8a8" />
      <path d={d} fill="#222" />
    </svg>
  );
}

function TabBar() {
  return (
    <div className="flex flex-1 items-start bg-[linear-gradient(#8a8a8a_0_1px,#ededed_1px)]">
      <div className="flex w-[53px] gap-[2px] pt-px pl-px">
        <NavButton d="M3 3h1.200v5H3zM8 3v5L4.500 5.500z" />
        <NavButton d="M7 3v5L3.500 5.500z" />
        <NavButton d="M4 3v5l3.500-2.500z" />
        <NavButton d="M7 3h1.200v5H7zM3 3v5l3.500-2.500z" />
      </div>
      <div className="relative h-[13px] w-[103px]">
        <svg className="absolute top-0 left-0" width="103" height="13" viewBox="0 0 103 13">
          <path d="M80 1h21l-5.500 11h-20z" fill="#d8d8d8" stroke="#8a8a8a" />
          <path d="M1 0l6 12.500h67L79.500 0z" fill="#fff" />
          <path d="M1 .5l6 12h67L79.500 .5" fill="none" stroke="#8a8a8a" />
          <path d="M85.500 2.500h3v3h3v3h-3v3h-3v-3h-3v-3h3z" fill="#7ac91c" stroke="#3f8f0b" />
        </svg>
        <span className={`absolute top-0 left-[7px] text-[7.5px] leading-[12px] tracking-[0.1px] whitespace-nowrap text-black ${UI}`}>
          QA0 failure rates
        </span>
      </div>
      <div className="ml-[289px] flex h-[14px] flex-1 items-center">
        <div className="h-[13px] w-[7px] border border-[#8a8a8a] bg-linear-to-r from-white to-[#e4e4e4]" />
        <div className="flex h-[14px] flex-1 items-center bg-[#d6d6d6] pl-[3px]">
          <div className="h-[7px] w-[357px] rounded-full bg-[#9b9b9b]" />
        </div>
      </div>
    </div>
  );
}

function Calc() {
  return (
    <div className={`flex h-full min-w-0 flex-1 flex-col overflow-hidden border-t border-white bg-[#ededed] text-[14px] text-[#2e3436] ${UI}`}>
      <div className="flex h-[63px] shrink-0 flex-col bg-[linear-gradient(#ffffff_0,#ededed_26px)]">
        <div className="h-[23px] pt-px text-center leading-[21px] font-bold tracking-[0.1px]">
          <span className="relative left-[68px]">2013.1_observingEfficiency.xls – LibreOffice Calc</span>
        </div>
        <div className="flex h-[40px] items-center pt-[1px] pl-[10px] leading-[20px]">
          <MenuItem label="File" className="w-[43px]" />
          <MenuItem label="Edit" className="w-[45px]" />
          <MenuItem label="View" className="w-[52px]" />
          <MenuItem label="Insert" className="w-[59px]" />
          <MenuItem label="Format" k={1} className="w-[68px]" />
          <MenuItem label="Tools" className="w-[55px]" />
          <MenuItem label="Data" className="w-[53px]" />
          <MenuItem label="Window" className="w-[74px]" />
          <MenuItem label="Help" className="w-[40px]" />
        </div>
      </div>
      <ToolbarMain />
      <ToolbarFormat />
      <FormulaBar />
      <Sheet />
      <TabBar />
    </div>
  );
}

export default function App() {
  return (
    <div className="flex h-[800px] w-[1780px] overflow-hidden bg-white">
      <Browser />
      <Calc />
    </div>
  );
}
